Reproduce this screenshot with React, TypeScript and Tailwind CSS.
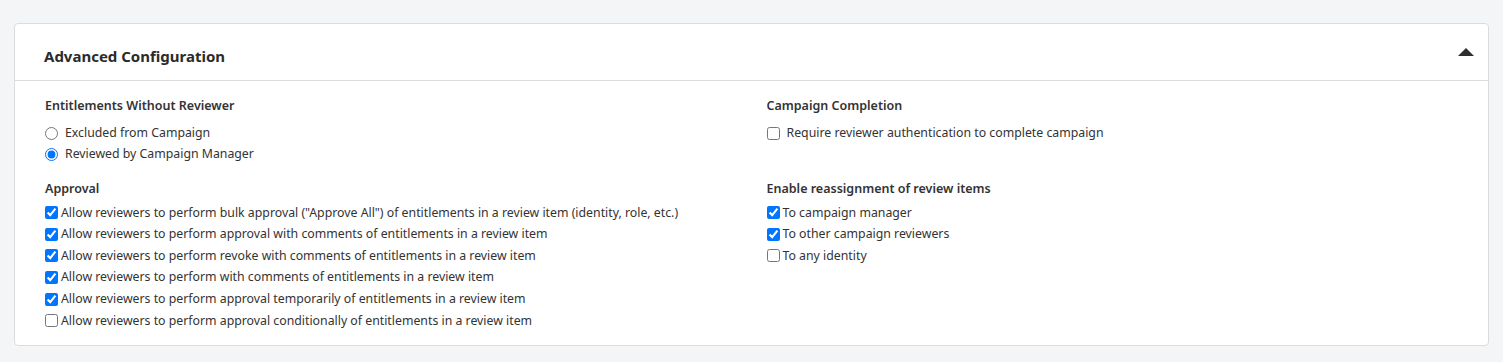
import React, { useState } from 'react';

const approvalOptions = [
  { label: 'Allow reviewers to perform bulk approval ("Approve All") of entitlements in a review item (identity, role, etc.)', checked: true },
  { label: 'Allow reviewers to perform approval with comments of entitlements in a review item', checked: true },
  { label: 'Allow reviewers to perform revoke with comments of entitlements in a review item', checked: true },
  { label: 'Allow reviewers to perform with comments of entitlements in a review item', checked: true },
  { label: 'Allow reviewers to perform approval temporarily of entitlements in a review item', checked: true },
  { label: 'Allow reviewers to perform approval conditionally of entitlements in a review item', checked: false },
];

const reassignOptions = [
  { label: 'To campaign manager', checked: true },
  { label: 'To other campaign reviewers', checked: true },
  { label: 'To any identity', checked: false },
];

function CheckRow({ label, defaultChecked }: { label: string; defaultChecked: boolean }) {
  return (
    <label className="flex items-center h-[21.6px]">
      <input
        type="checkbox"
        defaultChecked={defaultChecked}
        className="m-0 w-[13px] h-[13px] accent-[#0075ff]"
      />
      <span className="ml-[3px]">{label}</span>
    </label>
  );
}

export default function App() {
  const [open, setOpen] = useState(true);
  const [reviewer, setReviewer] = useState('manager');

  return (
    <div
      className="min-h-[362px] bg-[#f4f5f7] pt-[23px] px-[14px] text-[#333] text-[12.3px]"
      style={{ fontFamily: '"Noto Sans", "Open Sans", sans-serif' }}
    >
      <div className="bg-white border border-[#dcdcdc] rounded-[4px]">
        <div className="flex items-center justify-between h-[57px] pt-[8px] pl-[29px] pr-[14px] border-b border-[#dcdcdc]">
          <h2 className="text-[15px] font-bold text-[#2b2b2b]">Advanced Configuration</h2>
          <button onClick={() => setOpen(!open)} className="p-0 -mt-[8px]">
            <svg width="16" height="8" viewBox="0 0 16 8">
              <path d={open ? 'M0 8 L8 0 L16 8 Z' : 'M0 0 L8 8 L16 0 Z'} fill="#2f2f2f" />
            </svg>
          </button>
        </div>
        {open && (
          <div className="grid grid-cols-2 gap-x-[30px] px-[30px] pt-[15px] pb-[13px]">
            <div>
              <h3 className="text-[12.5px] font-semibold h-[20px] leading-[20px]">Entitlements Without Reviewer</h3>
              <div className="mt-[7px] h-[56px]">
                <label className="flex items-center h-[21px]">
                  <input
                    type="radio"
                    name="reviewer"
                    checked={reviewer === 'excluded'}
                    onChange={() => setReviewer('excluded')}
                    className="m-0 w-[13px] h-[13px] accent-[#0075ff]"
                  />
                  <span className="ml-[7px]">Excluded from Campaign</span>
                </label>
                <label className="flex items-center h-[21px]">
                  <input
                    type="radio"
                    name="reviewer"
                    checked={reviewer === 'manager'}
                    onChange={() => setReviewer('manager')}
                    className="m-0 w-[13px] h-[13px] accent-[#0075ff]"
                  />
                  <span className="ml-[7px]">Reviewed by Campaign Manager</span>
                </label>
              </div>
              <h3 className="text-[12.5px] font-semibold h-[20px] leading-[20px]">Approval</h3>
              <div className="mt-[3px]">
                {approvalOptions.map((o) => (
                  <CheckRow key={o.label} label={o.label} defaultChecked={o.checked} />
                ))}
              </div>
            </div>
            <div>
              <h3 className="text-[12.5px] font-semibold h-[20px] leading-[20px]">Campaign Completion</h3>
              <div className="mt-[7px] h-[56px]">
                <label className="flex items-center h-[21px]">
                  <input type="checkbox" className="m-0 w-[13px] h-[13px] accent-[#0075ff]" />
                  <span className="ml-[7px]">Require reviewer authentication to complete campaign</span>
                </label>
              </div>
              <h3 className="text-[12.5px] font-semibold h-[20px] leading-[20px]">Enable reassignment of review items</h3>
              <div className="mt-[3px]">
                {reassignOptions.map((o) => (
                  <CheckRow key={o.label} label={o.label} defaultChecked={o.checked} />
                ))}
              </div>
            </div>
          </div>
        )}
      </div>
    </div>
  );
}
